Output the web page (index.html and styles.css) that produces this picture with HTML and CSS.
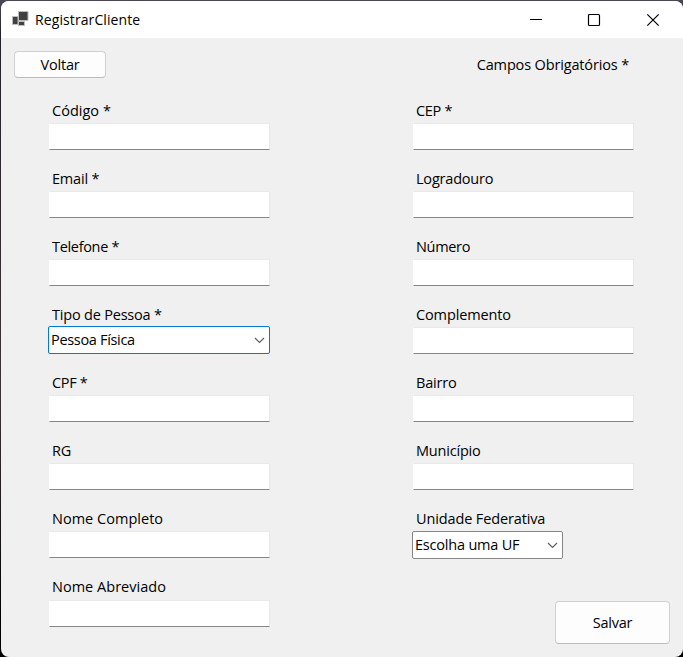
FILE: index.html
```html
<!DOCTYPE html>
<html lang="pt-BR">
<head>
<meta charset="utf-8">
<title>RegistrarCliente</title>
<link rel="stylesheet" href="styles.css">
</head>
<body>
<div class="window">
  <header class="titlebar">
    <svg class="app-icon" width="17" height="16" viewBox="0 0 17 16">
      <g fill="#404040" stroke="#bcbcbc" stroke-width="1"><path d="M.5 5.500h5.500v8h-5.500zM6.500.5h9.500v9h-9.500zM6.500 10.500h6v4h-6z"/></g>
    </svg>
    <h1 class="title">RegistrarCliente</h1>
    <svg class="controls" width="130" height="14" viewBox="0 0 130 14" fill="none" stroke="#000">
      <path d="M0 6.500h12"/>
      <rect x="58.500" y="1.500" width="11" height="11" rx="1" stroke-width="1.200"/>
      <path d="M117.300 1.300l11.400 11.400M128.700 1.300l-11.400 11.400" stroke-width="1.200"/>
    </svg>
  </header>
  <main class="form">
    <div class="topline">
      <button class="button">Voltar</button>
      <span class="note">Campos Obrigatórios *</span>
    </div>
    <div class="columns">
      <section class="column">
        <div class="field"><label class="loose">Código *</label><input class="input"></div>
        <div class="field"><label>Email *</label><input class="input"></div>
        <div class="field"><label class="tight">Telefone *</label><input class="input"></div>
        <div class="field"><label>Tipo de Pessoa *</label>
          <div class="combo active"><span class="tight">Pessoa Física</span><svg width="11" height="7" viewBox="0 0 11 7"><path d="M1 1l4.500 4.500L10 1"/></svg></div></div>
        <div class="field"><label class="tight">CPF *</label><input class="input"></div>
        <div class="field"><label>RG</label><input class="input"></div>
        <div class="field"><label class="loose">Nome Completo</label><input class="input"></div>
        <div class="field last"><label class="loose">Nome Abreviado</label><input class="input"></div>
      </section>
      <section class="column">
        <div class="field"><label class="tight">CEP *</label><input class="input"></div>
        <div class="field"><label>Logradouro</label><input class="input"></div>
        <div class="field"><label class="tight">Número</label><input class="input"></div>
        <div class="field"><label class="normal">Complemento</label><input class="input"></div>
        <div class="field"><label>Bairro</label><input class="input"></div>
        <div class="field"><label>Município</label><input class="input"></div>
        <div class="field"><label class="normal">Unidade Federativa</label>
          <div class="combo small"><span>Escolha uma UF</span><svg width="11" height="7" viewBox="0 0 11 7"><path d="M1 1l4.500 4.500L10 1"/></svg></div></div>
        <button class="button save">Salvar</button>
      </section>
    </div>
  </main>
</div>
</body>
</html>
```
FILE: styles.css
```css
* { box-sizing: border-box; }
body {
  margin: 0;
  height: 657px;
  padding: 1px 0 0 1px;
  overflow: hidden;
  background: linear-gradient(#4b4856, #242229 5%, #3a3435 60%, #000 96%);
  font: 14.5px/22px "Open Sans", "Noto Sans", sans-serif;
  letter-spacing: -0.2px;
  color: #000;
}
.window {
  height: 656px;
  border-radius: 8px;
  overflow: hidden;
  background: #f0f0f0;
}
.titlebar {
  display: flex;
  align-items: center;
  height: 37px;
  padding: 0 23px 0 11px;
  background: #fff;
}
.app-icon { margin-top: -1px; }
.title {
  margin: 0 auto 0 6px;
  font-size: 14px;
  font-weight: 400;
  letter-spacing: 0.1px;
}
.form { padding: 13px 13px 0; }
.topline {
  display: flex;
  justify-content: space-between;
  align-items: center;
  height: 27px;
  padding-right: 41px;
}
.note { letter-spacing: -0.15px; }
.button {
  width: 92px;
  height: 27px;
  padding: 0;
  border: 1px solid #d0d0d0;
  border-bottom-color: #bcbcbc;
  border-radius: 4px;
  background: #fdfdfd;
  font: inherit;
  letter-spacing: inherit;
  color: inherit;
}
.columns {
  display: flex;
  gap: 144px;
  padding: 22px 0 0 35px;
}
.column {
  display: flex;
  flex-direction: column;
  width: 220px;
}
.field { height: 68px; }
.field label {
  display: block;
  width: max-content;
  height: 22px;
  margin-left: 3px;
  white-space: nowrap;
}
.loose { letter-spacing: 0.02px; }
.normal { letter-spacing: -0.13px; }
.tight { letter-spacing: -0.32px; }
.input {
  display: block;
  width: 221px;
  height: 27px;
  margin-top: 1px;
  padding: 0 3px;
  border: 1px solid #e9e9e9;
  border-left-color: #fff;
  border-bottom-color: #868686;
  border-radius: 1px;
  outline: none;
  background: #fff;
  font: inherit;
}
.last .input { margin-top: 2px; }
.combo {
  display: flex;
  justify-content: space-between;
  align-items: center;
  width: 222px;
  height: 28px;
  margin: 0 0 0 -1px;
  padding: 0 4px 0 2px;
  border: 1px solid #868686;
  border-radius: 2px;
  background: #fff;
  white-space: nowrap;
}
.combo svg {
  fill: none;
  stroke: #5c5c5c;
  stroke-width: 1.1;
  margin-top: 1px;
}
.active { border-color: #0078d4; }
.small { width: 151px; margin-top: 1px; }
.save {
  align-self: flex-end;
  width: 115px;
  height: 43px;
  margin: 25px -37px 0 0;
}
```
